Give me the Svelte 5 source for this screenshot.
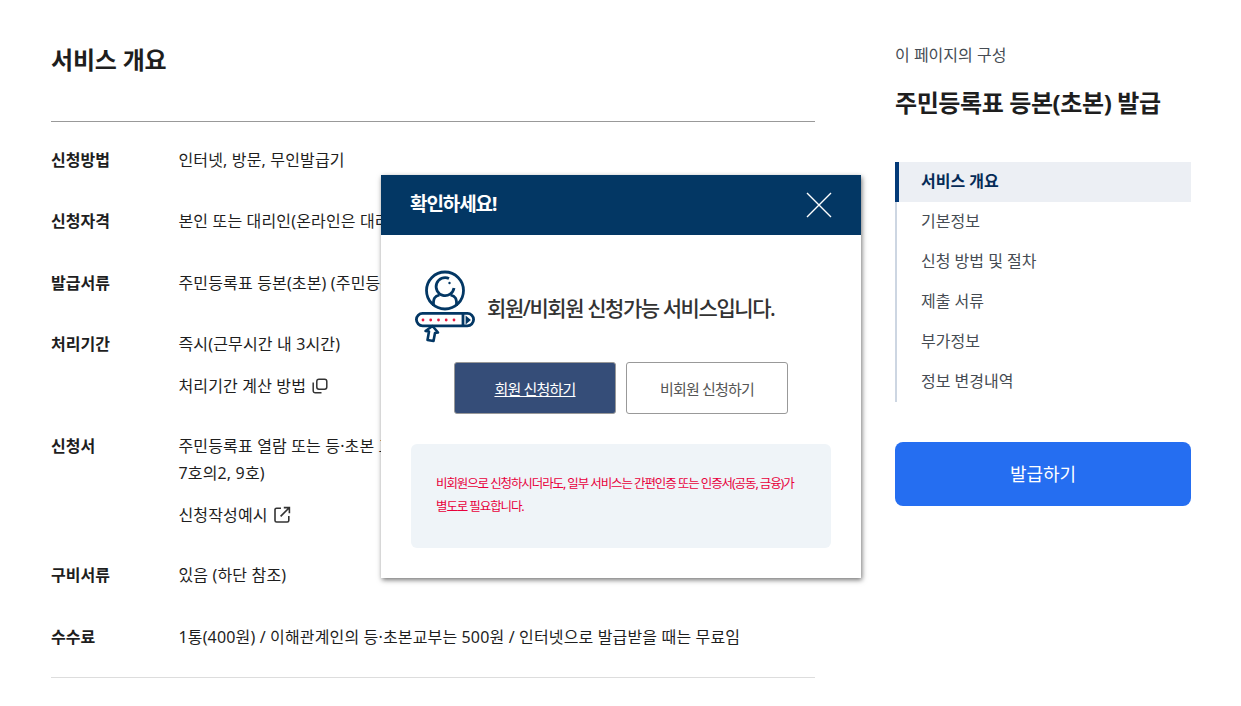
<script lang="ts">
  const rows = [
    { label: '신청방법', text: '인터넷, 방문, 무인발급기' },
    { label: '신청자격', text: '본인 또는 대리인(온라인은 대리인 신청 불가)' },
    { label: '발급서류', text: '주민등록표 등본(초본) (주민등록법 시행규칙)' },
    { label: '구비서류', text: '있음 (하단 참조)' },
    { label: '수수료', text: '1통(400원) / 이해관계인의 등·초본교부는 500원 / 인터넷으로 발급받을 때는 무료임' }
  ];
  const nav = ['서비스 개요', '기본정보', '신청 방법 및 절차', '제출 서류', '부가정보', '정보 변경내역'];
</script>

<div class="page">
  <main class="content">
    <h2 class="title">서비스 개요</h2>
    <dl class="info">
      {#each rows.slice(0, 3) as row}
        <div class="row">
          <dt>{row.label}</dt>
          <dd>{row.text}</dd>
        </div>
      {/each}
      <div class="row multi">
        <dt>처리기간</dt>
        <dd>
          <p>즉시(근무시간 내 3시간)</p>
          <p class="link">처리기간 계산 방법
            <svg width="18" height="18" viewBox="0 0 18 18" fill="none" stroke="#333" stroke-width="1.5">
              <rect x="5.800" y="2.200" width="10" height="10" rx="2.200" />
              <path d="M2.200 5.500v8.300a2 2 0 0 0 2 2h6.300" />
            </svg>
          </p>
        </dd>
      </div>
      <div class="row multi">
        <dt>신청서</dt>
        <dd>
          <p>주민등록표 열람 또는 등·초본 교부 신청서(주민등록법 시행규칙 별지 제<br />7호의2, 9호)</p>
          <p class="link">신청작성예시
            <svg width="18" height="18" viewBox="0 0 18 18" fill="none" stroke="#333" stroke-width="1.600">
              <path d="M8 2.200H3.600a1.600 1.600 0 0 0-1.600 1.600v10.600A1.600 1.600 0 0 0 3.600 16h10.600a1.600 1.600 0 0 0 1.600-1.600V10" />
              <path d="M7.600 10.400 16.200 1.800M10.800 1.600h5.600v5.600" />
            </svg>
          </p>
        </dd>
      </div>
      {#each rows.slice(3) as row}
        <div class="row">
          <dt>{row.label}</dt>
          <dd>{row.text}</dd>
        </div>
      {/each}
    </dl>
  </main>

  <aside class="side">
    <p class="side-cap">이 페이지의 구성</p>
    <h3 class="side-title">주민등록표 등본(초본) 발급</h3>
    <ul class="nav">
      {#each nav as item, i}
        <li class:active={i === 0}>{item}</li>
      {/each}
    </ul>
    <button class="issue">발급하기</button>
  </aside>
</div>

<div class="modal" role="dialog">
  <div class="modal-head">
    <strong>확인하세요!</strong>
    <svg class="close" width="26" height="26" viewBox="0 0 26 26" stroke="#fff" stroke-width="1.400">
      <path d="M1 1l24 24M25 1 1 25" />
    </svg>
  </div>
  <div class="modal-body">
    <div class="notice">
      <svg width="70" height="80" viewBox="0 0 70 80" fill="none" stroke="#033764" stroke-width="2.800">
        <circle cx="35" cy="25.500" r="18.500" />
        <path d="M39 13.500A9 9 0 1 0 44 23" />
        <circle cx="39.500" cy="18" r="1.200" fill="#033764" stroke="none" />
        <path d="M23.500 41C23 33 25 31 29.500 30M46.500 41C47 33 45 31 40.500 30" />
        <rect x="6.400" y="48.400" width="57.200" height="12.400" rx="6.200" />
        <path d="M53 48.400v12.400" />
        <path d="M56.500 52.500l3 2.500-3 2.500z" fill="#033764" stroke-width="1.800" />
        <g fill="#e8173f" stroke="none">
          <circle cx="13" cy="55" r="1.400" />
          <circle cx="20.700" cy="55" r="1.400" />
          <circle cx="28.500" cy="55" r="1.400" />
          <circle cx="36.200" cy="55" r="1.400" />
          <circle cx="44" cy="55" r="1.400" />
        </g>
        <path d="M22.500 61 28 67.500l-3 .5-1.500 8-6-1 1.500-8.500-3.500-.5z" fill="#fff" stroke-width="2.600" stroke-linejoin="round" />
      </svg>
      <p>회원/비회원 신청가능 서비스입니다.</p>
    </div>
    <div class="actions">
      <a class="btn primary" href="#member">회원 신청하기</a>
      <a class="btn" href="#guest">비회원 신청하기</a>
    </div>
    <div class="warn">비회원으로 신청하시더라도, 일부 서비스는 간편인증 또는 인증서(공동, 금융)가<br />별도로 필요합니다.</div>
  </div>
</div>

<style>
  :global(body) {
    margin: 0;
    background: #fff;
    font-family: "Noto Sans", "Noto Sans CJK KR", sans-serif;
    color: #1e1e1e;
  }

  .page {
    display: flex;
    gap: 80px;
    padding: 0 50px 0 51px;
    height: 706px;
    overflow: hidden;
    box-sizing: border-box;
  }

  .content {
    width: 764px;
    flex: none;
  }

  .title {
    margin: 0;
    padding: 41px 0 42px;
    font-size: 24px;
    line-height: 38px;
    font-weight: 700;
    letter-spacing: -0.200px;
    border-bottom: 1px solid #999;
  }

  .info {
    margin: 0;
    padding: 24.600px 0 0;
    border-bottom: 1px solid #ddd;
  }

  .row {
    display: flex;
    padding: 0 0 34.400px;
    font-size: 16px;
    line-height: 27.200px;
  }

  .row.multi {
    padding-bottom: 33.400px;
  }

  .row:last-child {
    padding-bottom: 26px;
  }

  dt {
    width: 127.500px;
    flex: none;
    font-weight: 700;
  }

  dd {
    margin: 0;
    flex: 1;
    white-space: nowrap;
    letter-spacing: 0.150px;
  }

  dd p {
    margin: 0;
  }

  dd .link {
    display: flex;
    align-items: center;
    gap: 5px;
    margin-top: 14px;
  }

  .side {
    width: 296px;
    flex: none;
  }

  .side-cap {
    margin: 44px 0 0;
    font-size: 16px;
    line-height: 22px;
    color: #464c53;
  }

  .side-title {
    margin: 19px 0 0;
    font-size: 24px;
    line-height: 36px;
    font-weight: 700;
    letter-spacing: -0.400px;
  }

  .nav {
    list-style: none;
    margin: 41px 0 0;
    padding: 0;
    border-left: 2px solid #cdd6e2;
  }

  .nav li {
    height: 40px;
    line-height: 38px;
    padding-left: 24px;
    font-size: 16px;
    color: #464c53;
    box-sizing: border-box;
  }

  .nav li.active {
    margin-left: -2px;
    padding-left: 22px;
    border-left: 4px solid #033a78;
    background: #eceff4;
    font-weight: 700;
    color: #052b57;
  }

  .issue {
    display: block;
    width: 296px;
    height: 64px;
    margin-top: 40px;
    padding: 0 0 3px;
    border: 0;
    border-radius: 8px;
    background: #256ef1;
    color: #fff;
    font-family: inherit;
    font-size: 18px;
  }

  .modal {
    position: absolute;
    left: 381px;
    top: 175px;
    width: 480px;
    height: 403px;
    background: #fff;
    box-shadow: 1px 2px 5px rgba(0, 0, 0, 0.55);
  }

  .modal-head {
    display: flex;
    align-items: center;
    justify-content: space-between;
    height: 60px;
    padding: 0 29px;
    background: #033764;
    color: #fff;
    font-size: 19px;
    line-height: 26px;
    letter-spacing: -1.100px;
  }

  .modal-head strong {
    margin-top: -2px;
  }

  .modal-body {
    padding: 30px 30px 0;
  }

  .notice {
    display: flex;
    align-items: center;
    gap: 7px;
    height: 80px;
    margin-left: -1px;
    color: #333;
  }

  .notice p {
    margin: 0;
    padding-top: 4px;
    font-size: 21px;
    font-weight: 500;
    letter-spacing: -1.430px;
  }

  .actions {
    display: flex;
    justify-content: center;
    gap: 10px;
    margin-top: 17px;
  }

  .btn {
    display: flex;
    align-items: center;
    justify-content: center;
    width: 162px;
    height: 52px;
    box-sizing: border-box;
    border: 1px solid #999;
    border-radius: 3px;
    color: #555;
    font-size: 15px;
    letter-spacing: -0.800px;
    text-decoration: none;
  }

  .btn.primary {
    background: #354d78;
    color: #fff;
    text-decoration: underline;
  }

  .warn {
    margin-top: 30px;
    height: 104px;
    box-sizing: border-box;
    padding: 29px 25px;
    border-radius: 6px;
    background: #eff4f8;
    color: #e8003c;
    font-size: 12.500px;
    line-height: 22.500px;
    letter-spacing: -1.100px;
  }
</style>
